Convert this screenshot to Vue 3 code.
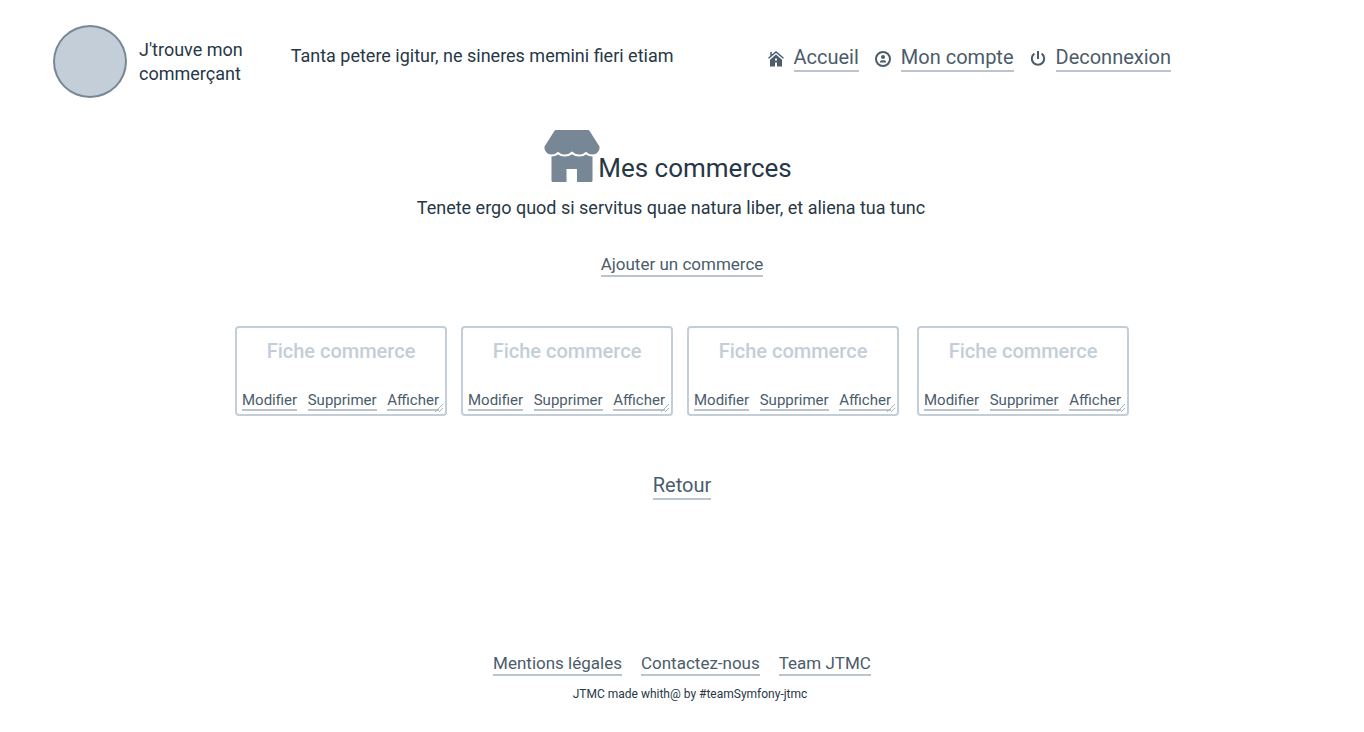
<script setup>
const groups = [[1, 2, 3], [4]]
const actions = ['Modifier', 'Supprimer', 'Afficher']
const footerLinks = ['Mentions légales', 'Contactez-nous', 'Team JTMC']
</script>

<template>
  <div class="page">
    <header class="header">
      <div class="brand">
        <span class="logo"></span>
        <span class="brand-name">J'trouve mon<br />commerçant</span>
      </div>
      <p class="tagline">Tanta petere igitur, ne sineres memini fieri etiam</p>
      <nav class="nav">
        <span class="nav-item">
          <svg class="icon" viewBox="0 0 16 16" aria-hidden="true">
            <path d="M.5 7.300 8 1l7.500 6.300M3 1v3.500" fill="none" stroke="currentColor" stroke-width="1.500" />
            <path d="M8 3.600 14 8.800V15.500H9V11.500H7V15.500H2V8.800Z" fill="currentColor" />
            <path d="M7 7.500h2v2H7Z" fill="#fff" />
          </svg>
          <a class="link large" href="#">Accueil</a>
        </span>
        <span class="nav-item">
          <svg class="icon" viewBox="0 0 16 16" aria-hidden="true">
            <circle cx="8" cy="8" r="7" fill="none" stroke="currentColor" stroke-width="2" />
            <circle cx="8" cy="6" r="2" fill="currentColor" />
            <path d="M5 11.500V10.600C5 9.300 6.300 9.200 8 9.200s3 .1 3 1.400v.9Z" fill="currentColor" />
          </svg>
          <a class="link large" href="#">Mon compte</a>
        </span>
        <span class="nav-item">
          <svg class="icon" viewBox="0 0 16 16" aria-hidden="true">
            <path d="M8 0v8M4.400 2.600a6.200 6.200 0 1 0 7.200 0" fill="none" stroke="currentColor" stroke-width="2" />
          </svg>
          <a class="link large" href="#">Deconnexion</a>
        </span>
      </nav>
    </header>

    <main class="main">
      <div class="heading">
        <svg class="shop" viewBox="0 0 56 54" aria-hidden="true">
          <path d="M12 1H44Q45 1 45.600 2L55.500 17.500C56 22 52.500 25.500 48.500 25.500Q44.500 25.500 42 22.800Q39 25.800 35 25.500Q31 25.500 28 22.600Q25 25.500 21 25.500Q17 25.800 14 22.800Q11.500 25.500 7.500 25.500C3.500 25.500 0 22 .500 17.500L10.400 2Q11 1 12 1Z" />
          <path d="M7.500 27.500Q11.500 27.500 14 25.500Q17 27.800 21 27.500Q25 27.500 28 25.200Q31 27.500 35 27.500Q39 27.800 42 25.500Q44.500 27.500 48.500 27.500V51.500Q48.500 53 47 53H33V40H22.500V53H9Q7.500 53 7.500 51.500Z" />
        </svg>
        <h1 class="title">Mes commerces</h1>
      </div>
      <p class="intro">Tenete ergo quod si servitus quae natura liber, et aliena tua tunc</p>
      <a class="link medium" href="#">Ajouter un commerce</a>

      <section class="cards">
        <div v-for="(group, i) in groups" :key="i" class="card-group">
          <article v-for="n in group" :key="n" class="card">
            <textarea class="card-text" placeholder="Fiche commerce" :aria-label="`Fiche commerce ${n}`"></textarea>
            <div class="card-actions">
              <a v-for="action in actions" :key="action" class="link small" href="#">{{ action }}</a>
            </div>
            <svg class="grip" viewBox="0 0 10 10" aria-hidden="true">
              <path d="M1 9 9 1M5 9 9 5" />
            </svg>
          </article>
        </div>
      </section>

      <a class="link large" href="#">Retour</a>
    </main>

    <footer class="footer">
      <nav class="footer-nav">
        <a v-for="label in footerLinks" :key="label" class="link medium" href="#">{{ label }}</a>
      </nav>
      <p class="credit">JTMC made whith@ by #teamSymfony-jtmc</p>
    </footer>
  </div>
</template>

<style>
body {
  margin: 0;
  background: #fff;
}
</style>

<style scoped>
.page {
  box-sizing: border-box;
  min-height: 100vh;
  display: flex;
  flex-direction: column;
  color: #273746;
  font-family: Roboto, "Liberation Sans", sans-serif;
  font-size: 18px;
  line-height: 24px;
}
p,
h1 {
  margin: 0;
}
.link {
  color: #4b5c6b;
  text-decoration: none;
  border-bottom: 2px solid #bcc3cb;
  white-space: nowrap;
}
.large {
  font-size: 20px;
  line-height: 25px;
}
.medium {
  font-size: 17px;
  line-height: 21px;
}
.small {
  font-size: 15px;
  line-height: 17px;
}
.header {
  display: flex;
  align-items: flex-start;
  padding: 25px 53px 0;
}
.brand {
  display: flex;
  align-items: center;
  gap: 12px;
  margin-right: 48px;
}
.logo {
  box-sizing: border-box;
  width: 74px;
  height: 73px;
  border: 2px solid #778796;
  border-radius: 50%;
  background: #c3ced8;
}
.brand-name {
  white-space: nowrap;
}
.tagline {
  margin-top: 19px;
  margin-right: 94px;
}
.nav {
  display: flex;
  gap: 16px;
  margin-top: 20px;
}
.nav-item {
  display: flex;
  align-items: center;
  gap: 10px;
}
.nav-item .link {
  display: block;
}
.icon {
  width: 16px;
  height: 16px;
  color: #4b5c6b;
}
.main {
  display: flex;
  flex-direction: column;
  align-items: center;
}
.heading {
  display: flex;
  align-items: flex-end;
  margin-top: 31px;
  margin-right: 28px;
}
.shop {
  width: 56px;
  height: 54px;
  margin-right: -2px;
  fill: #778796;
}
.title {
  font-size: 26px;
  font-weight: 400;
  line-height: 30px;
}
.intro {
  margin: 13px 22px 34px 0;
}
.cards {
  display: flex;
  flex-wrap: wrap;
  justify-content: center;
  gap: 18px;
  margin: 49px 0 57px;
}
.card-group {
  display: flex;
  flex-wrap: wrap;
  gap: 14px;
}
.card {
  position: relative;
}
.card-text {
  display: block;
  box-sizing: border-box;
  width: 212px;
  height: 90px;
  padding: 10px 6px;
  border: 2px solid #c3ced8;
  border-radius: 4px;
  background: #fff;
  color: #273746;
  font-family: inherit;
  font-size: 20px;
  font-weight: 500;
  line-height: 26px;
  text-align: center;
  resize: none;
  overflow: hidden;
}
.card-text::placeholder {
  color: #c3ced8;
  opacity: 1;
}
.card-actions {
  position: absolute;
  left: 7px;
  right: 8px;
  bottom: 5px;
  display: flex;
  justify-content: space-between;
}
.grip {
  position: absolute;
  right: 3px;
  bottom: 3px;
  width: 10px;
  height: 10px;
  fill: none;
  stroke: #a9b6c2;
}
.footer {
  display: flex;
  flex-direction: column;
  align-items: center;
  margin-top: auto;
  padding-bottom: 29px;
}
.footer-nav {
  display: flex;
  gap: 19px;
}
.credit {
  margin: 9px 0 0 16px;
  font-size: 12px;
  line-height: 18px;
}
</style>
